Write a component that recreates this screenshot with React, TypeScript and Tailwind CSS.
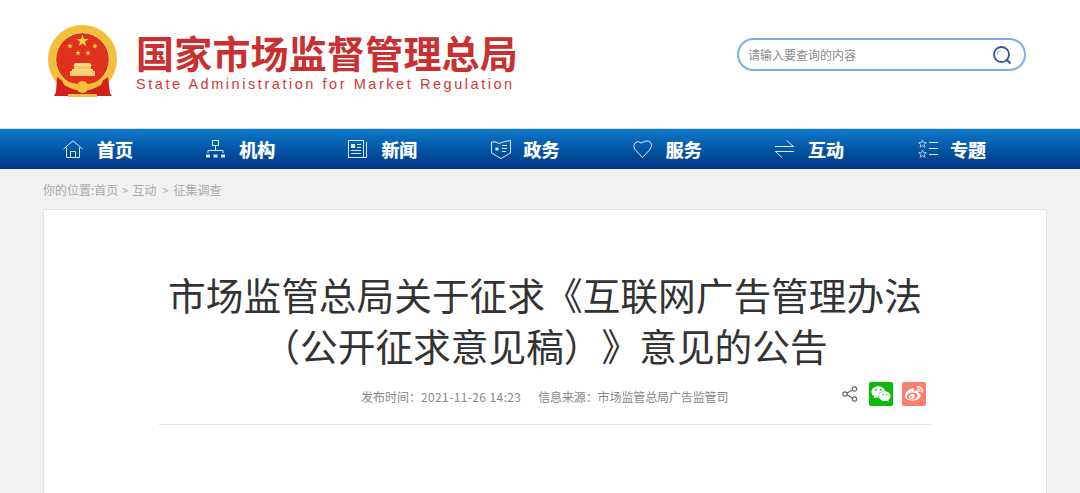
import React from 'react';
import { FaWeibo, FaWeixin } from 'react-icons/fa';

const star = (cx: number, cy: number, r: number) => {
  const pts: string[] = [];
  for (let i = 0; i < 10; i++) {
    const rad = i % 2 === 0 ? r : r * 0.4;
    const a = (Math.PI / 5) * i - Math.PI / 2;
    pts.push(`${(cx + rad * Math.cos(a)).toFixed(2)},${(cy + rad * Math.sin(a)).toFixed(2)}`);
  }
  return pts.join(' ');
};

const Emblem = () => (
  <svg width="70" height="73" viewBox="0 0 70 73">
    <circle cx="34.5" cy="34.5" r="30.5" fill="#e0301e" stroke="#f2bf3a" strokeWidth="8" />
    <circle cx="34.5" cy="34.5" r="26.8" fill="none" stroke="#f9dc7e" strokeWidth="0.8" />
    <path d="M9 52 L20 60 L34 65 L48 60 L60 52 L62 68 L64 71 L48 71 L40 72 L28 72 L22 71 L6 71 L8 67 Z" fill="#d3201f" />
    <polygon points={star(34.5, 16, 6.5)} fill="#f7d23d" />
    <polygon points={star(22, 21, 3)} fill="#f7d23d" />
    <polygon points={star(47, 21, 3)} fill="#f7d23d" />
    <polygon points={star(30, 28, 3)} fill="#f7d23d" />
    <polygon points={star(40, 28, 3)} fill="#f7d23d" />
    <path d="M27 38 H42 L44 41 H25 Z" fill="#f8d98a" />
    <rect x="26" y="41" width="17" height="3" fill="#f3c65a" />
    <rect x="24" y="44" width="21" height="2" fill="#f8d98a" />
    <rect x="22" y="46" width="25" height="5" fill="#f5cf70" />
    <path d="M13 53 Q34.5 66 56 53 L53 60 Q34.5 71 16 60 Z" fill="#f2bf3a" />
    <circle cx="34.5" cy="62" r="6" fill="#f2bf3a" />
    <rect x="20" y="69" width="29" height="3" fill="#f2bf3a" />
  </svg>
);

const HomeIcon = () => (
  <svg width="20" height="18" viewBox="0 0 20 18" fill="none" stroke="#dbe8f5" strokeWidth="1">
    <path d="M0.5 9 L10 0.8 L19.5 9" />
    <path d="M3.5 7.5 V17.5 H16.5 V7.5" />
    <path d="M7.5 17.5 V11.5 H12.5 V17.5" />
  </svg>
);

const OrgIcon = () => (
  <svg className="ml-[1px]" width="19" height="18" viewBox="0 0 19 18" fill="none" stroke="#dbe8f5" strokeWidth="1">
    <rect x="6.5" y="0.5" width="6" height="5" />
    <path d="M9.5 5.5 V10.5 M2 13 V10.5 H17 V13" />
    <rect x="0" y="14.5" width="4" height="3" fill="#dbe8f5" stroke="none" />
    <rect x="7.5" y="14.5" width="4" height="3" fill="#dbe8f5" stroke="none" />
    <rect x="15" y="14.5" width="4" height="3" fill="#dbe8f5" stroke="none" />
  </svg>
);

const NewsIcon = () => (
  <svg className="ml-[1px]" width="19" height="18" viewBox="0 0 19 18" fill="none" stroke="#dbe8f5" strokeWidth="1">
    <rect x="0.5" y="0.5" width="15" height="17" />
    <path d="M18.5 2 V17.5 H15.5" />
    <rect x="3" y="4" width="4" height="4" fill="#dbe8f5" stroke="none" />
    <path d="M9 4.5 H13 M9 7.5 H13 M3 10.5 H13 M3 13.5 H13" />
  </svg>
);

const GovIcon = () => (
  <svg className="ml-[1px]" width="20" height="19" viewBox="0 0 20 19" fill="none" stroke="#dbe8f5" strokeWidth="1">
    <path d="M0.5 2 Q5 1 8 3.5 Q14 1 19.5 0.5 V13 L10 18.5 L0.5 13 Z" />
    <rect x="4.5" y="7.5" width="3" height="3" fill="#dbe8f5" stroke="none" />
    <path d="M11 5.5 H16 M11 8.5 H16 M11 11.5 H15" />
  </svg>
);

const HeartIcon = () => (
  <svg className="ml-[1px]" width="19" height="18" viewBox="0 0 19 18" fill="none" stroke="#dbe8f5" strokeWidth="1">
    <path d="M9.5 17.5 L1.5 9 Q-0.5 5 2.5 2.5 Q5.5 0.5 8 3 L13 1 Q18 0.5 18.5 5 Q18.5 8 16 10.5 Z" />
  </svg>
);

const SwapIcon = () => (
  <svg className="ml-[1px]" width="19" height="18" viewBox="0 0 19 18" fill="none" stroke="#dbe8f5" strokeWidth="1">
    <path d="M0 6.5 H18.5 L11.5 0.5" />
    <path d="M19 11.5 H0.5 L7 17.5" />
  </svg>
);

const TopicIcon = () => (
  <svg className="ml-[2px]" width="21" height="20" viewBox="0 0 21 20" fill="none" stroke="#a9c4e2" strokeWidth="1">
    <polygon points={star(4.5, 5, 4.2)} />
    <polygon points={star(4.5, 15, 4.2)} />
    <path d="M11 3.5 H20 M11 9.5 H20 M11 15.5 H20" stroke="#dbe8f5" />
  </svg>
);

const navItems = [
  { label: '首页', icon: <HomeIcon /> },
  { label: '机构', icon: <OrgIcon /> },
  { label: '新闻', icon: <NewsIcon /> },
  { label: '政务', icon: <GovIcon /> },
  { label: '服务', icon: <HeartIcon /> },
  { label: '互动', icon: <SwapIcon /> },
  { label: '专题', icon: <TopicIcon /> },
];

const App: React.FC = () => {
  return (
    <div className="h-[493px] overflow-hidden flex flex-col bg-[#f1f1f1] font-['Noto_Sans_CJK_SC','Liberation_Sans',sans-serif]">
      <header className="h-[128px] shrink-0 bg-white flex items-start pl-[48px]">
        <div className="mt-[25px]">
          <Emblem />
        </div>
        <div className="ml-[18px] mt-[32px] w-[390px]">
          <h1 className="text-[38px] leading-[40px] tracking-[0.2px] font-bold text-[#c9302f] whitespace-nowrap">国家市场监督管理总局</h1>
          <p className="mt-[2px] text-[14.5px] leading-[20px] tracking-[2.55px] text-[#d0383a] whitespace-nowrap font-['Liberation_Sans',sans-serif]">
            State Administration for Market Regulation
          </p>
        </div>
        <div className="ml-[211px] mt-[38px] w-[289px] h-[33px] rounded-full border-2 border-[#7db0e0] flex items-center justify-between pl-[9px] pr-[12px]">
          <span className="text-[12px] text-[#8a8a8a]">请输入要查询的内容</span>
          <svg className="mt-[1px]" width="20" height="20" viewBox="0 0 20 20" fill="none">
            <circle cx="9.5" cy="9.5" r="7.5" stroke="#2a5a9c" strokeWidth="1.8" />
            <path d="M5.5 9.5 A4 4 0 0 1 9 5.5" stroke="#9db8da" strokeWidth="1.2" />
            <path d="M15 15 L18.5 18.5" stroke="#2a5a9c" strokeWidth="2" />
          </svg>
        </div>
      </header>

      <nav className="h-[41px] shrink-0 border-t border-[#cfe0f0] bg-gradient-to-b from-[#1079ca] to-[#003582] flex items-center pl-[63px]">
        {navItems.map(item => (
          <div key={item.label} className="w-[142.2px] shrink-0 flex items-center">
            <div className="w-[34px] flex items-center">{item.icon}</div>
            <span className="text-[18px] leading-[24px] font-bold text-white [text-shadow:0_0_1px_rgba(255,255,255,0.7)]">{item.label}</span>
          </div>
        ))}
      </nav>

      <div className="h-[40px] shrink-0 pl-[43px] pt-[2px] flex items-center text-[12px] text-[#aaaaaa]">
        <span>你的位置:首页</span>
        <span className="mx-[4px] text-[11px]">&gt;</span>
        <span>互动</span>
        <span className="ml-[6px] mr-[5px] text-[11px]">&gt;</span>
        <span>征集调查</span>
      </div>

      <main className="ml-[43px] w-[1004px] flex-1 bg-white border border-[#dfe5ee] border-b-0 flex flex-col items-center">
        <h2 className="mt-[58px] w-[780px] text-center text-[37.7px] leading-[51px] text-[#333333] [text-spacing-trim:space-all]">
          市场监管总局关于征求《互联网广告管理办法
          <br />
          （公开征求意见稿）》意见的公告
        </h2>
        <div className="mt-[12px] w-[772px] h-[43px] border-b border-[#e2e2e2] flex items-start">
          <div className="ml-[202px] flex items-center h-[30px] text-[12px] text-[#888888]">
            <span>发布时间：<span className="tracking-[0.37px]">2021-11-26 14:23</span></span>
            <span className="ml-[17px] tracking-[-0.12px]">信息来源：市场监管总局广告监管司</span>
          </div>
          <div className="ml-auto mr-[5px] flex items-center h-[24px]">
            <svg width="16" height="16" viewBox="0 0 16 16" fill="none" stroke="#666666" strokeWidth="1.2">
              <circle cx="12.5" cy="3" r="2.2" />
              <circle cx="3" cy="8" r="2.2" />
              <circle cx="12.5" cy="13" r="2.2" />
              <path d="M5 7 L10.5 4 M5 9 L10.5 12" />
            </svg>
            <span className="ml-[11px] w-[24px] h-[24px] bg-[#09bb07] rounded-[2px] flex items-center justify-center text-white">
              <FaWeixin size={20} />
            </span>
            <span className="ml-[9px] w-[24px] h-[24px] bg-[#f97f6f] rounded-[2px] flex items-center justify-center text-white">
              <FaWeibo size={18} />
            </span>
          </div>
        </div>
      </main>
    </div>
  );
};

export default App;
